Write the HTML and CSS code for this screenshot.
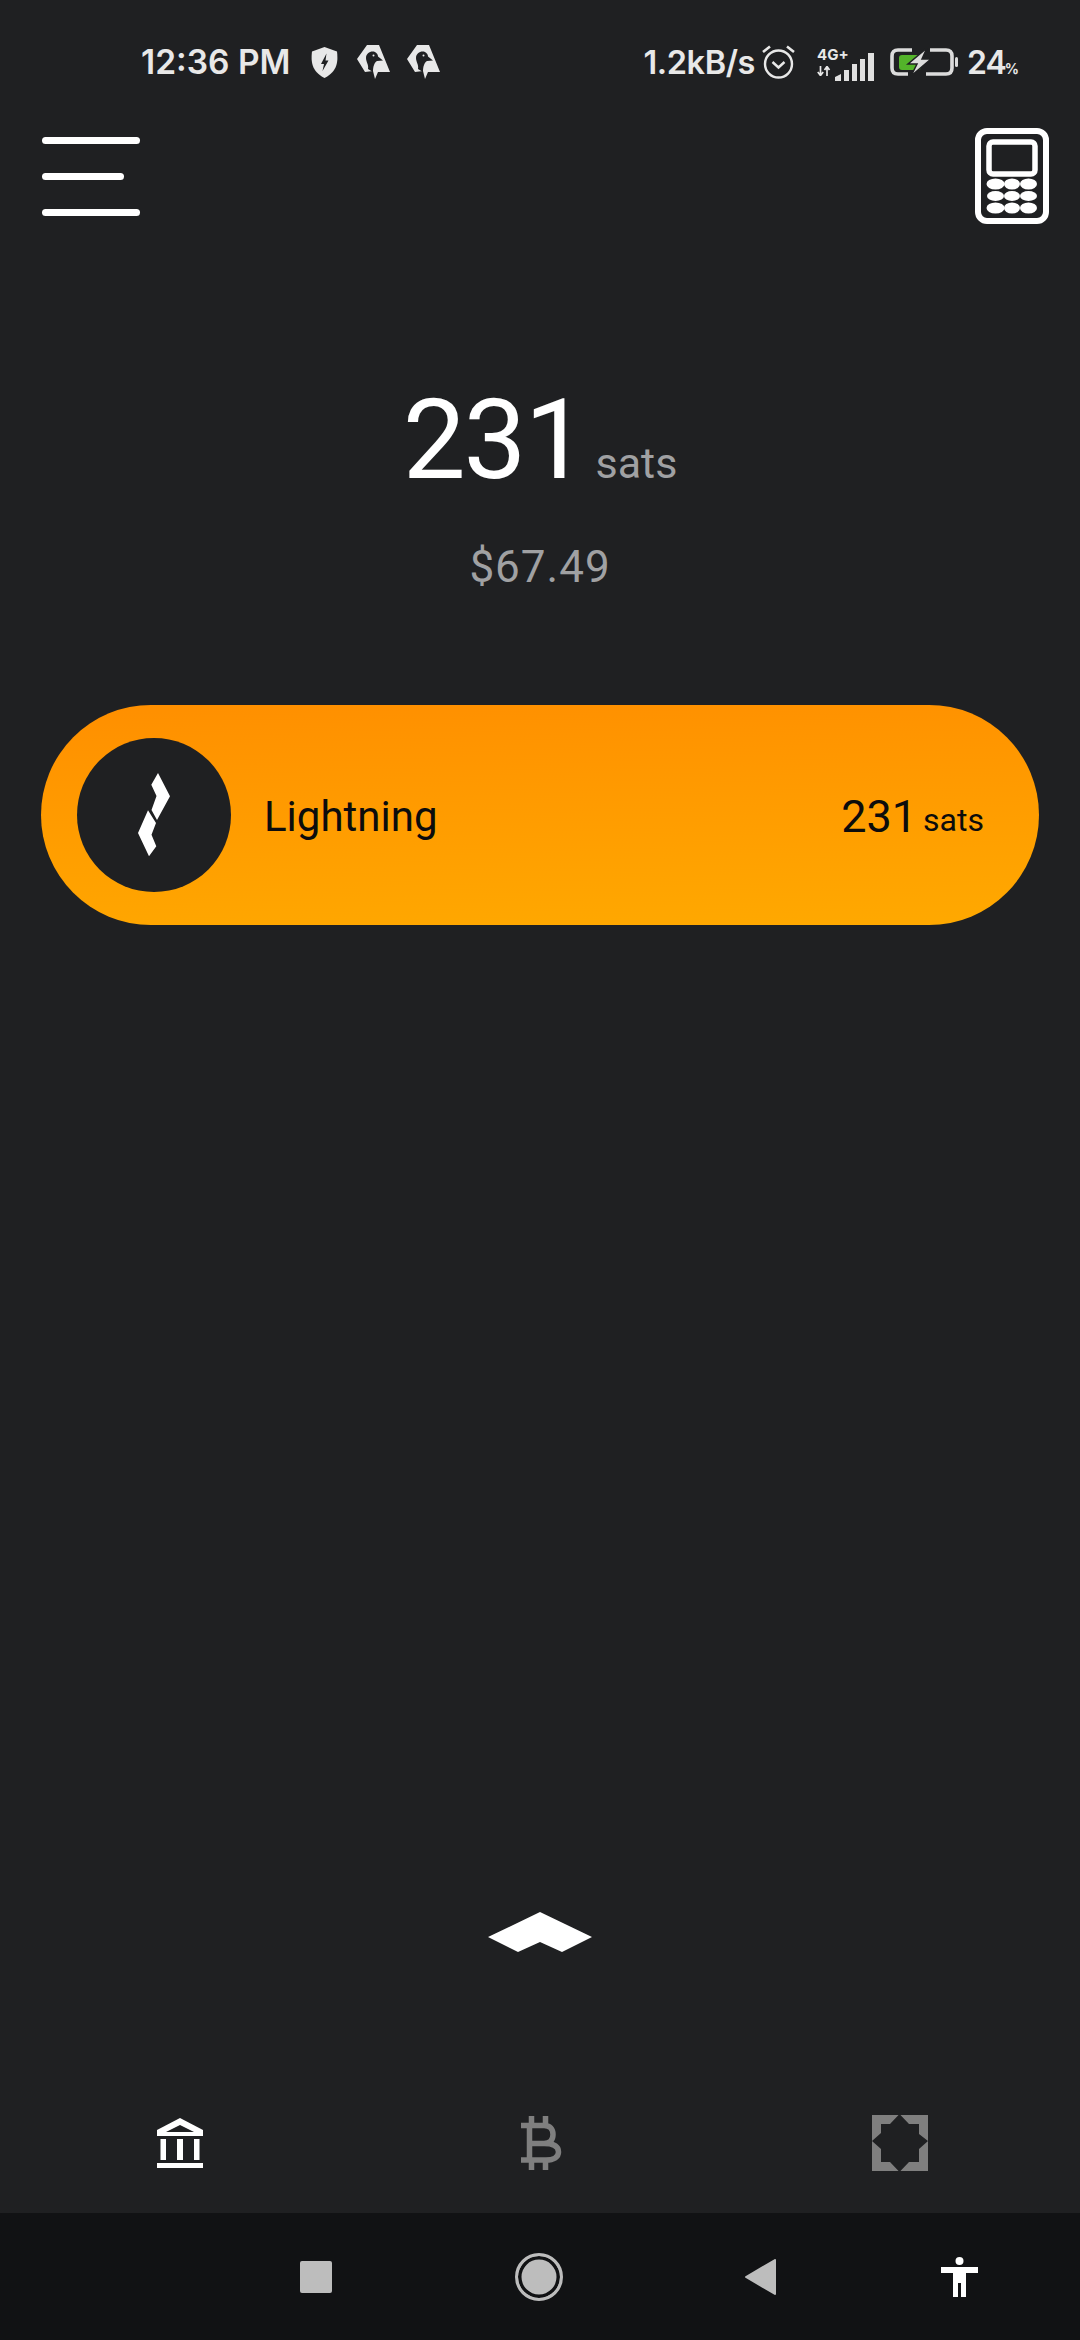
FILE: index.html
```html
<!DOCTYPE html>
<html lang="en">
<head>
<meta charset="utf-8">
<title>Wallet</title>
<link rel="stylesheet" href="styles.css">
</head>
<body>
<div class="screen">
  <div class="status">
    <div class="status-left">
      <span class="time">12:36 PM</span>
      <svg class="i-shield" viewBox="0 0 27 31"><path fill="#e8e8e8" d="M13.5 0 L26 4.5 C27 14 27 24 13.5 31 C0 24 0 14 1 4.5 Z"/><path fill="#1f2022" d="M15.5 6.5 L10 17 L13 17 L11.5 24 L17.5 13.5 L14.5 13.5 Z"/></svg>
      <svg class="i-duck" viewBox="0 0 33 34"><path fill="#e8e8e8" d="M10 0 L22 0 L33 27 L21 27 L18 34 L16 26 L8 27 L0 14 Z"/><path fill="#1f2022" d="M9 13 C9 8 14 5.5 18 7 C20 8 21 10 21 11.5 L26 15.5 L20 16 C17 18 16 22 16 27 L11 24 C12 20 9 17 9 13 Z"/><circle cx="16.5" cy="10.5" r="1" fill="#e8e8e8"/></svg>
      <svg class="i-duck second" viewBox="0 0 33 34"><path fill="#e8e8e8" d="M10 0 L22 0 L33 27 L21 27 L18 34 L16 26 L8 27 L0 14 Z"/><path fill="#1f2022" d="M9 13 C9 8 14 5.5 18 7 C20 8 21 10 21 11.5 L26 15.5 L20 16 C17 18 16 22 16 27 L11 24 C12 20 9 17 9 13 Z"/><circle cx="16.5" cy="10.5" r="1" fill="#e8e8e8"/></svg>
    </div>
    <div class="status-right">
      <span class="speed">1.2kB/s</span>
      <svg class="i-alarm" viewBox="0 0 33 34"><circle cx="16.5" cy="19" r="13.5" fill="none" stroke="#e8e8e8" stroke-width="2.4"/><path d="M10.5 17 L16.5 22.5 L22.5 17" fill="none" stroke="#e8e8e8" stroke-width="2.4"/><path d="M1 7 L8 1.5 M32 7 L25 1.5" stroke="#e8e8e8" stroke-width="2.6"/></svg>
      <div class="net">
        <span class="net-label">4G+</span>
        <svg class="i-arrows" viewBox="0 0 15 10"><path d="M3.5 0 V9 M0.8 6 L3.5 9.5 L6.2 6 M10 10 V1 M7.5 4 L10 0.5 L12.5 4" fill="none" stroke="#e8e8e8" stroke-width="1.7"/></svg>
      </div>
      <svg class="i-signal" viewBox="0 0 39 28"><path fill="#e0e0e0" d="M0 28 V24 L6 21 V28 Z M9 28 V17 H14 V28 Z M17 28 V11 H22 V28 Z M25 28 V6 H30 V28 Z M33 28 V0 H39 V28 Z"/></svg>
      <svg class="i-battery" viewBox="0 0 68 28"><path d="M22 2 H8 Q2 2 2 8 V20 Q2 26 8 26 H18 M36 26 H56 Q62 26 62 20 V8 Q62 2 56 2 H40" fill="none" stroke="#dcdcdc" stroke-width="3.6"/><rect x="9" y="7" width="22" height="15" rx="3" fill="#53b32a"/><path fill="#dcdcdc" d="M37 0 L18 16 L27 16 L21 28 L41 11 L32 11 Z" stroke="#1f2022" stroke-width="1.5"/><rect x="65" y="9" width="3" height="10" rx="1.5" fill="#dcdcdc"/></svg>
      <span class="pct">24<small>%</small></span>
    </div>
  </div>

  <header class="topbar">
    <div class="menu"><i class="line"></i><i class="line short"></i><i class="line"></i></div>
    <svg class="i-calc" viewBox="0 0 74 96"><rect x="3" y="3" width="68" height="90" rx="9" fill="none" stroke="#fff" stroke-width="6"/><rect x="14" y="14" width="46" height="32" rx="4" fill="none" stroke="#fff" stroke-width="5.5"/><g fill="#fff"><ellipse cx="20.5" cy="56" rx="9" ry="5.5"/><ellipse cx="37" cy="56" rx="8" ry="5.5"/><ellipse cx="53.5" cy="56" rx="8.5" ry="5.5"/><ellipse cx="20.5" cy="68" rx="8.5" ry="5"/><ellipse cx="37" cy="68" rx="8" ry="5"/><ellipse cx="53.5" cy="68" rx="8.5" ry="5"/><ellipse cx="20.5" cy="80" rx="9" ry="5.5"/><ellipse cx="37" cy="80" rx="8" ry="5.5"/><ellipse cx="53.5" cy="80" rx="8.5" ry="5.5"/></g></svg>
  </header>

  <section class="balance">
    <div class="amount"><span class="amount-num">231</span><span class="amount-unit">sats</span></div>
    <div class="fiat">$67.49</div>
  </section>

  <div class="pill">
    <div class="pill-icon">
      <svg class="i-bolt" viewBox="0 0 33 84"><path fill="#fff" d="M20 0 L32 23.3 L19 47 L13.5 37 L18.5 23 L13.3 11.7 Z M10 37.3 L18 50 L13.5 61.7 L18.3 73.3 L11 83.3 L0 60 Z"/></svg>
    </div>
    <span class="pill-label">Lightning</span>
    <span class="pill-amount">231</span><span class="pill-unit">sats</span>
  </div>

  <div class="spacer"></div>

  <div class="pull">
    <svg class="i-chev" viewBox="0 0 104 40"><path fill="#fff" d="M52 0 L104 25 L74 40 L52 30 L30 40 L0 25 Z"/></svg>
  </div>

  <nav class="tabs">
    <svg class="i-bank" viewBox="0 0 46 50"><path fill="#fff" d="M23 0 L46 12 V18 H0 V12 Z"/><path fill="#1f2022" d="M23 7 L9 14 H37 Z"/><path fill="#fff" d="M3.5 21 H9 V42 H3.5 Z M20 21 H26 V42 H20 Z M37 21 H42.5 V42 H37 Z M0 45 H46 V50 H0 Z"/></svg>
    <svg class="i-btc" viewBox="0 0 41 54"><path fill="none" stroke="#7f7f7f" stroke-width="5.5" d="M0 9.5 H23 C29 9.5 32 13 32 18.5 C32 24 29 27.5 23 27.5 H8 M23 27.5 C32 27.5 37.5 30 37.5 36 C37.5 41 33 44 25 44 H0 M8.5 9.5 V44 M10.5 0 V9 M24.5 0 V9 M10.5 44 V54 M24.5 44 V54"/></svg>
    <svg class="i-scan" viewBox="0 0 56 56"><rect width="56" height="56" fill="#7f7f7f"/><path fill="#1f2022" d="M27.5 -1 L37 9 L47 9 L47 19 L56 26 L47 34 L47 47 L37 47 L27.5 57 L18 47 L9 47 L9 34 L0 26 L9 18 L9 9 L18 9 Z"/></svg>
  </nav>

  <footer class="sysnav">
    <i class="k-square"></i>
    <i class="k-home"></i>
    <svg class="i-back" viewBox="0 0 31 36"><path fill="#bdbdbd" stroke="#bdbdbd" stroke-width="2" stroke-linejoin="round" d="M30 1 V35 L1 18 Z"/></svg>
    <svg class="i-access" viewBox="0 0 37 40"><circle cx="18.5" cy="4" r="4" fill="#fff"/><path fill="#fff" d="M0 10 H37 V16 H25 V40 H20 V26 H17 V40 H12 V16 H0 Z"/></svg>
  </footer>
</div>
</body>
</html>
```
FILE: styles.css
```css
* { box-sizing: border-box; }
html, body { margin: 0; padding: 0; }
body { background: #1f2022; font-family: Roboto, "Liberation Sans", sans-serif; }
.screen { width: 1080px; height: 2340px; display: flex; flex-direction: column; overflow: hidden; background: #1f2022; }

.status { height: 124px; flex: none; display: flex; justify-content: space-between; align-items: center; padding: 0 62px 0 141px; color: #e8e8e8; font-family: Inter, Roboto, sans-serif; font-weight: 600; }
.status-left, .status-right { display: flex; align-items: center; }
.time { font-size: 33.5px; }
.i-shield { width: 27px; height: 31px; margin-left: 21px; }
.i-duck { width: 33px; height: 34px; margin-left: 19px; }
.i-duck.second { margin-left: 17px; }
.speed { font-size: 32.5px; letter-spacing: -0.4px; }
.i-alarm { width: 33px; height: 34px; margin-left: 7px; }
.net { display: flex; flex-direction: column; width: 30px; margin-left: 22px; gap: 5px; }
.net-label { font-size: 15px; line-height: 13px; font-weight: 700; }
.i-arrows { width: 15px; height: 10px; display: block; }
.i-signal { width: 39px; height: 28px; margin-left: -12px; align-self: flex-end; margin-bottom: 1px; }
.i-battery { width: 68px; height: 28px; margin-left: 16px; }
.pct { font-size: 32px; margin-left: 9px; letter-spacing: -1px; }
.pct small { font-size: 14px; margin-left: -1px; letter-spacing: -1px; font-weight: 700; }

.topbar { flex: none; height: 96px; margin-top: 4px; display: flex; justify-content: space-between; align-items: center; padding: 0 31px 0 42px; }
.menu { width: 98px; height: 79px; display: flex; flex-direction: column; justify-content: space-between; }
.line { display: block; height: 7px; width: 98px; border-radius: 4px; background: #fff; }
.line.short { width: 82px; }
.i-calc { width: 74px; height: 96px; }

.balance { flex: none; display: flex; flex-direction: column; align-items: center; margin-top: 160px; }
.amount { display: flex; align-items: baseline; height: 112px; line-height: 112px; }
.amount-num { font-size: 112px; font-weight: 400; color: #fff; letter-spacing: -2px; }
.amount-unit { font-size: 43px; color: #a0a1a3; margin-left: 10px; }
.fiat { font-size: 44px; line-height: 52px; margin-top: 45px; color: #a0a1a3; letter-spacing: 1px; }

.pill { flex: none; height: 220px; margin: 112px 41px 0; border-radius: 110px; padding-left: 36px; padding-right: 55px; display: flex; align-items: center; background: linear-gradient(178deg, #ff8f00, #ffa900); color: #0c0c0c; }
.pill-icon { width: 154px; height: 154px; border-radius: 50%; background: #1f2022; display: flex; align-items: center; justify-content: center; flex: none; }
.i-bolt { width: 33px; height: 84px; }
.pill-label { font-size: 42px; margin-left: 33px; flex: 1; padding-top: 2px; }
.pill-amount { font-size: 45px; padding-top: 2px; }
.pill-unit { font-size: 32px; margin-left: 6px; align-self: center; padding-top: 9px; }

.spacer { flex: 1; }
.pull { flex: none; display: flex; justify-content: center; }
.i-chev { width: 104px; height: 40px; }

.tabs { flex: none; height: 140px; padding: 0 152px 0 157px; margin-top: 121px; display: flex; justify-content: space-between; align-items: center; }
.i-bank { width: 46px; height: 50px; }
.i-btc { width: 41px; height: 54px; margin-left: 8px; }
.i-scan { width: 56px; height: 56px; }

.sysnav { flex: none; height: 127px; background: #111214; display: flex; align-items: center; padding-left: 300px; }
.k-square { width: 32px; height: 32px; border-radius: 2px; background: #bdbdbd; }
.k-home { width: 48px; height: 48px; margin-left: 183px; border-radius: 50%; border: 3.5px solid #bdbdbd; background: #bdbdbd; box-shadow: inset 0 0 0 3.5px #111214; }
.i-back { width: 31px; height: 36px; margin-left: 182px; }
.i-access { width: 37px; height: 40px; margin-left: 165px; }
```
